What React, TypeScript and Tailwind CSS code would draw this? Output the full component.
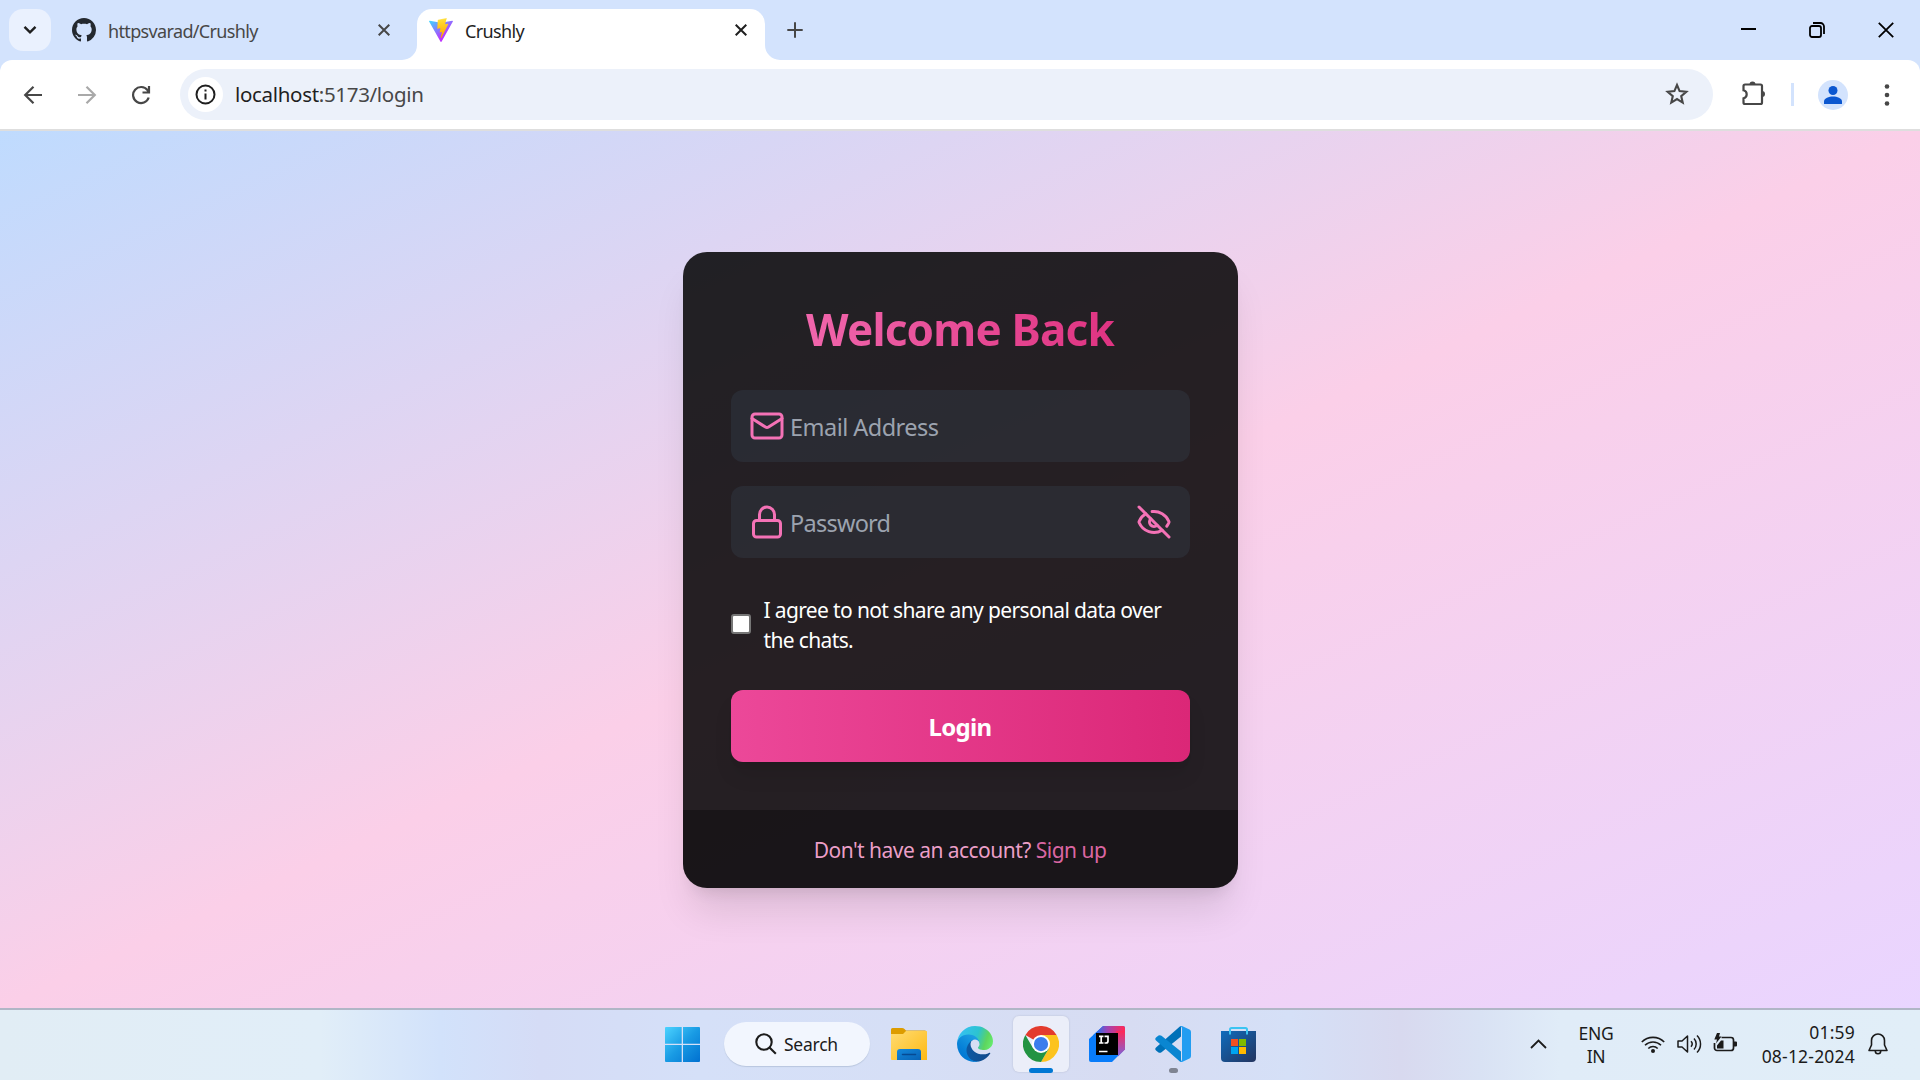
import React from "react";

const UI = "font-['Noto_Sans','Open_Sans',sans-serif]";

function GithubMark() {
  return (
    <svg width="24" height="24" viewBox="0 0 16 16" fill="#24292f" className="shrink-0">
      <path d="M8 0C3.58 0 0 3.58 0 8c0 3.54 2.29 6.53 5.47 7.59.4.07.55-.17.55-.38 0-.19-.01-.82-.01-1.49-2.01.37-2.53-.49-2.69-.94-.09-.23-.48-.94-.82-1.13-.28-.15-.68-.52-.01-.53.63-.01 1.08.58 1.23.82.72 1.21 1.87.87 2.33.66.07-.52.28-.87.51-1.07-1.78-.2-3.64-.89-3.64-3.95 0-.87.31-1.59.82-2.15-.08-.2-.36-1.02.08-2.12 0 0 .67-.21 2.2.82.64-.18 1.32-.27 2-.27s1.36.09 2 .27c1.53-1.04 2.2-.82 2.2-.82.44 1.1.16 1.92.08 2.12.51.56.82 1.27.82 2.15 0 3.07-1.87 3.75-3.65 3.95.29.25.54.73.54 1.48 0 1.07-.01 1.93-.01 2.2 0 .21.15.46.55.38A8.01 8.01 0 0 0 16 8c0-4.42-3.58-8-8-8z" />
    </svg>
  );
}

function ViteMark() {
  return (
    <svg width="24" height="24" viewBox="0 0 256 257" className="shrink-0">
      <defs>
        <linearGradient id="va" x1="-.8%" x2="57.6%" y1="7.7%" y2="78.4%">
          <stop offset="0%" stopColor="#41D1FF" />
          <stop offset="100%" stopColor="#BD34FE" />
        </linearGradient>
        <linearGradient id="vb" x1="43.4%" x2="50.3%" y1="2.2%" y2="89%">
          <stop offset="0%" stopColor="#FFEA83" />
          <stop offset="8.3%" stopColor="#FFDD35" />
          <stop offset="100%" stopColor="#FFA800" />
        </linearGradient>
      </defs>
      <path fill="url(#va)" d="M255.153 37.938L134.897 252.976c-2.483 4.44-8.862 4.466-11.382.048L.875 37.958c-2.746-4.814 1.371-10.646 6.827-9.67l120.385 21.517a6.537 6.537 0 0 0 2.322-.004l117.867-21.483c5.438-.991 9.574 4.796 6.877 9.62Z" />
      <path fill="url(#vb)" d="M185.432.063L96.44 17.501a3.268 3.268 0 0 0-2.634 3.014l-5.474 92.456a3.268 3.268 0 0 0 3.997 3.378l24.777-5.718c2.318-.535 4.413 1.507 3.936 3.838l-7.361 36.047c-.495 2.426 1.782 4.5 4.151 3.78l15.304-4.649c2.372-.72 4.652 1.36 4.15 3.788l-11.698 56.621c-.732 3.542 3.979 5.473 5.943 2.437l1.313-2.028l72.516-144.72c1.215-2.423-.88-5.186-3.54-4.672l-25.505 4.922c-2.396.462-4.435-1.77-3.759-4.114l16.646-57.705c.677-2.35-1.37-4.583-3.769-4.113Z" />
    </svg>
  );
}

function TabClose({ color }: { color: string }) {
  return (
    <svg width="12" height="12" viewBox="0 0 12 12" fill="none" stroke={color} strokeWidth="2">
      <path d="M.7.7l10.6 10.6M11.3.7L.7 11.3" />
    </svg>
  );
}

function TabStrip() {
  return (
    <div className="flex h-[60px] bg-[#d3e3fd]">
      <div className="ml-[9px] mt-[9px] flex size-[42px] items-center justify-center rounded-[14px] bg-[#eaf1fe]">
        <svg width="14" height="10" viewBox="0 0 14 10" fill="none" stroke="#1f1f1f" strokeWidth="2.4">
          <path d="M1.5 1.8L7 7.3l5.500-5.500" />
        </svg>
      </div>
      <div className="ml-[21px] flex h-[60px] w-[318px] items-center">
        <GithubMark />
        <span className="ml-3 mt-[3px] whitespace-nowrap text-[18px] tracking-[-0.65px] text-[#474747]">httpsvarad/Crushly</span>
        <span className="ml-auto">
          <TabClose color="#474747" />
        </span>
      </div>
      <div className="relative ml-[27px] mt-[9px] flex h-[51px] w-[348px] items-center rounded-t-[15px] bg-white pl-3 pr-[18px]">
        <svg className="absolute bottom-0 -left-[15px]" width="15" height="15" viewBox="0 0 15 15" fill="#fff">
          <path d="M15 0v15H0A15 15 0 0 0 15 0z" />
        </svg>
        <svg className="absolute bottom-0 -right-[15px]" width="15" height="15" viewBox="0 0 15 15" fill="#fff">
          <path d="M0 0v15h15A15 15 0 0 1 0 0z" />
        </svg>
        <span className="mb-[9px]">
          <ViteMark />
        </span>
        <span className="mb-[6px] ml-3 text-[18px] tracking-[-0.65px] text-[#1f1f1f]">Crushly</span>
        <span className="mb-[9px] ml-auto">
          <TabClose color="#1f1f1f" />
        </span>
      </div>
      <div className="ml-[22px] mt-[22px]">
        <svg width="16" height="16" viewBox="0 0 16 16" stroke="#474747" strokeWidth="2">
          <path d="M8 .3v15.400M.3 8h15.400" />
        </svg>
      </div>
      <div className="ml-auto flex h-[59px] items-center pr-[26px]">
        <svg width="15" height="16" viewBox="0 0 15 16" stroke="#000" strokeWidth="2" className="mr-[53px]">
          <path d="M0 7h15" />
        </svg>
        <svg width="16" height="16" viewBox="0 0 16 16" fill="none" stroke="#000" strokeWidth="1.800" className="mr-[53px]">
          <rect x="1" y="4" width="11" height="11" rx="2" />
          <path d="M4 1h7.500A3.500 3.500 0 0 1 15 4.500V12" />
        </svg>
        <svg width="16" height="16" viewBox="0 0 16 16" stroke="#000" strokeWidth="1.800">
          <path d="M.8.8l14.400 14.400M15.200.8L.8 15.200" />
        </svg>
      </div>
    </div>
  );
}

function Toolbar() {
  return (
    <div className="bg-[#d3e3fd]">
      <div className="flex h-[71px] items-center rounded-t-[12px] border-b-2 border-[#dedede] bg-white">
        <svg width="20" height="20" viewBox="0 0 20 20" fill="none" stroke="#474747" strokeWidth="2.200" className="ml-[23px]">
          <path d="M19 10H2.500M10.500 1.700L2.200 10l8.300 8.300" />
        </svg>
        <svg width="20" height="20" viewBox="0 0 20 20" fill="none" stroke="#a9a9a9" strokeWidth="2.200" className="ml-[34px]">
          <path d="M1 10h16.500M9.500 1.700l8.300 8.300-8.300 8.300" />
        </svg>
        <svg width="20" height="20" viewBox="0 0 20 20" fill="none" stroke="#474747" strokeWidth="2.200" className="ml-[34px]">
          <path d="M17.700 12.500A8 8 0 1 1 16.500 5.200L18 7M18 1v6.500h-6.500" />
        </svg>
        <div className="ml-[29px] flex h-[51px] w-[1533px] items-center rounded-full bg-[#ecf1fa] pl-2 pr-6">
          <div className="flex size-[35px] items-center justify-center rounded-full bg-white">
            <svg width="21" height="21" viewBox="0 0 21 21" fill="none" stroke="#1f1f1f" strokeWidth="2">
              <circle cx="10.500" cy="10.500" r="9" />
              <path d="M10.500 9.500v6M10.500 5.500v2" />
            </svg>
          </div>
          <span className="ml-[12px] text-[20.500px] tracking-[-0.32px] text-[#474747]">
            <span className="text-[#1f1f1f]">localhost</span>:5173/login
          </span>
          <svg width="24" height="24" viewBox="0 0 24 24" fill="none" stroke="#474747" strokeWidth="2.100" className="mb-px ml-auto">
            <path d="M12 3l2.600 6.100 6.700.6-5.100 4.400 1.500 6.500L12 17.100l-5.700 3.500 1.500-6.500-5.100-4.400 6.700-.6z" />
          </svg>
        </div>
        <svg width="26" height="26" viewBox="0 0 26 26" fill="none" className="mb-[3px] ml-[28px]">
          <path d="M4 4.500H19.500a1.500 1.500 0 0 1 1.500 1.500V22.500a1.500 1.500 0 0 1-1.500 1.500H4a1.500 1.500 0 0 1-1.500-1.500V18.300a4.100 4.100 0 0 0 0-8V6A1.500 1.500 0 0 1 4 4.500z" stroke="#474747" strokeWidth="2.200" />
          <path d="M8.500 4.500a3 3 0 0 1 6 0zM21 11a3 3 0 0 1 0 6z" fill="#474747" />
        </svg>
        <div className="ml-[24px] h-[23px] w-[3px] bg-[#d3e3fd]" />
        <div className="ml-6 flex size-[30px] items-end justify-center rounded-full bg-[#d3e3fd]">
          <svg width="18" height="19" viewBox="0 0 18 19" fill="#0b57d0" className="mb-[6px]">
            <circle cx="9" cy="5.500" r="4.500" />
            <path d="M0 19v-2.500C0 13 5 11.500 9 11.500s9 1.500 9 5V19z" />
          </svg>
        </div>
        <svg width="6" height="22" viewBox="0 0 6 22" fill="#474747" className="ml-[36px]">
          <circle cx="3" cy="2.500" r="2.300" />
          <circle cx="3" cy="11" r="2.300" />
          <circle cx="3" cy="19.500" r="2.300" />
        </svg>
      </div>
    </div>
  );
}

const line = {
  width: 36,
  height: 36,
  viewBox: "0 0 24 24",
  fill: "none",
  stroke: "#f472b6",
  strokeWidth: 2,
  strokeLinecap: "round" as const,
  strokeLinejoin: "round" as const,
};

function LoginCard() {
  return (
    <div className="w-[555px] overflow-hidden rounded-[24px] bg-black/85 shadow-[0_30px_37px_-7px_rgba(0,0,0,0.1),0_12px_15px_-9px_rgba(0,0,0,0.1)]">
      <div className="h-[558px] px-12 pt-[49px]">
        <h2 className="mb-[32px] bg-[linear-gradient(to_right,#f472b6,#db2777)] bg-clip-text text-center text-[44px] leading-[57px] font-bold tracking-[-0.8px] text-transparent">
          Welcome Back
        </h2>
        <div className="flex h-[72px] items-center rounded-[12px] bg-[#374151]/35 pl-[18px]">
          <svg {...line}>
            <rect x="2" y="4" width="20" height="16" rx="2" />
            <path d="M22 7l-8.970 5.700a1.940 1.940 0 0 1-2.060 0L2 7" />
          </svg>
          <span className="ml-[5.500px] mt-[5px] text-[23.500px] tracking-[-0.53px] text-[#9ca3af]">Email Address</span>
        </div>
        <div className="mt-6 flex h-[72px] items-center rounded-[12px] bg-[#374151]/35 pl-[18px] pr-[18px]">
          <svg {...line}>
            <rect x="3" y="11" width="18" height="11" rx="2" />
            <path d="M7 11V7a5 5 0 0 1 10 0v4" />
          </svg>
          <span className="ml-[5.500px] mt-[5px] text-[23.500px] tracking-[-0.75px] text-[#9ca3af]">Password</span>
          <svg {...line} className="ml-auto">
            <path d="M10.733 5.076a10.744 10.744 0 0 1 11.205 6.575 1 1 0 0 1 0 .696 10.747 10.747 0 0 1-1.444 2.490" />
            <path d="M14.084 14.158a3 3 0 0 1-4.242-4.242" />
            <path d="M17.479 17.499a10.750 10.750 0 0 1-15.417-5.151 1 1 0 0 1 0-.696 10.750 10.750 0 0 1 4.446-5.143" />
            <path d="M2 2l20 20" />
          </svg>
        </div>
        <div className="mt-[37px] flex items-center">
          <span className="mb-[2px] size-5 shrink-0 rounded-[3px] border-2 border-[#767676] bg-white" />
          <p className="ml-[13px] whitespace-nowrap text-[21px] leading-[30px] tracking-[-0.64px] text-white">
            I agree to not share any personal data over
            <br />
            the chats.
          </p>
        </div>
        <button className="mt-[35px] h-[72px] w-full rounded-[12px] bg-[linear-gradient(to_right,#ec4899,#db2777)] pt-[2px] text-[24px] font-bold tracking-[-0.65px] text-white shadow-[0_15px_22px_-4px_rgba(0,0,0,0.1),0_6px_9px_-6px_rgba(0,0,0,0.1)]">
          Login
        </button>
      </div>
      <div className="flex h-[78px] items-center justify-center gap-[5px] bg-black/30 pt-[5px] text-[21px] tracking-[-0.53px]">
        <span className="text-[#f9a8d4]/95">Don't have an account?</span>
        <span className="text-[#f472b6]/90">Sign up</span>
      </div>
    </div>
  );
}

function WindowsLogo() {
  return (
    <svg width="35" height="35" viewBox="0 0 35 35">
      <defs>
        <linearGradient id="wl" x1="0" y1="0" x2="35" y2="35" gradientUnits="userSpaceOnUse">
          <stop stopColor="#4cd3ff" />
          <stop offset=".5" stopColor="#199be4" />
          <stop offset="1" stopColor="#0070d0" />
        </linearGradient>
      </defs>
      <path fill="url(#wl)" d="M1 0h15.700v16.700H0V1a1 1 0 0 1 1-1zM18 0h16a1 1 0 0 1 1 1v15.700H18zM0 18h16.700v17H1a1 1 0 0 1-1-1zM18 18h17v16a1 1 0 0 1-1 1H18z" />
    </svg>
  );
}

function FolderIcon() {
  return (
    <svg width="36" height="34" viewBox="0 0 36 34">
      <defs>
        <linearGradient id="fa" x1="0" y1="0" x2="1" y2="1">
          <stop stopColor="#ffdc73" />
          <stop offset="1" stopColor="#fdb913" />
        </linearGradient>
        <linearGradient id="fb" x1="0" y1="0" x2="1" y2="1">
          <stop stopColor="#1389dc" />
          <stop offset="1" stopColor="#0862b5" />
        </linearGradient>
      </defs>
      <path fill="#dd9c00" d="M1.500 1H11q1.500 0 2.500 1l1.500 1.500H34q1.500 0 1.500 1.500V16H0V2.500Q0 1 1.500 1z" />
      <path fill="url(#fa)" d="M0 7h12l3-3H35q1 0 1 1V33H1q-1 0-1-1z" />
      <path fill="url(#fb)" d="M9 22h18q3 0 3 3v8H6v-8q0-3 3-3z" />
      <path stroke="#064a92" strokeWidth="1.500" strokeLinecap="round" d="M11.500 27.500h13" />
    </svg>
  );
}

function EdgeIcon() {
  return (
    <svg width="36" height="36" viewBox="0 0 256 256">
      <defs>
        <linearGradient id="ea" x1="58" x2="231" y1="177" y2="177" gradientUnits="userSpaceOnUse">
          <stop stopColor="#0c59a4" />
          <stop offset="1" stopColor="#114a8b" />
        </linearGradient>
        <linearGradient id="eb" x1="150" x2="50" y1="100" y2="230" gradientUnits="userSpaceOnUse">
          <stop stopColor="#1b9de2" />
          <stop offset=".2" stopColor="#1595df" />
          <stop offset=".7" stopColor="#0680d7" />
          <stop offset="1" stopColor="#0078d4" />
        </linearGradient>
        <linearGradient id="ec" x1="20" x2="250" y1="50" y2="130" gradientUnits="userSpaceOnUse">
          <stop stopColor="#35c1f1" />
          <stop offset=".5" stopColor="#2cc3d0" />
          <stop offset=".8" stopColor="#5ed55e" />
          <stop offset="1" stopColor="#66eb6e" />
        </linearGradient>
      </defs>
      <path fill="url(#ea)" d="M231 190.500c-3.400 1.800-6.900 3.400-10.500 4.700a101.900 101.900 0 0 1-35.900 6.500c-47.300 0-88.500-32.500-88.500-74.300a31.500 31.500 0 0 1 16.400-27.300c-42.800 1.800-53.800 46.400-53.800 72.500 0 73.900 68.100 81.400 82.800 81.400 7.900 0 19.800-2.300 27-4.600l1.300-.4a128.300 128.300 0 0 0 66.600-52.800 4 4 0 0 0-5.400-5.700z" />
      <path fill="url(#eb)" d="M105.700 241.400a79.200 79.200 0 0 1-22.700-21.300 80.700 80.700 0 0 1 29.500-120c3.200-1.500 8.500-4.200 15.600-4.100a32.400 32.400 0 0 1 25.700 13 31.900 31.900 0 0 1 6.300 18.700c0-.2 24.500-79.600-80-79.600-43.900 0-80 41.700-80 78.200a130.200 130.200 0 0 0 12.100 56 128 128 0 0 0 156.400 67 75.500 75.500 0 0 1-62.800-7.800z" />
      <path fill="url(#ec)" d="M152.300 148.900c-.9 1-3.400 2.500-3.400 5.600 0 2.600 1.700 5.200 4.800 7.300 14.300 10 41.400 8.600 41.500 8.600a59.600 59.600 0 0 0 30.300-8.300 61.400 61.400 0 0 0 30.400-52.900c.3-22.400-8-37.300-11.300-43.900C223.500 23.900 177.700 0 128 0A128 128 0 0 0 0 126.200c.5-36.500 36.800-66 80-66 3.500 0 23.500.3 42 10 16.300 8.600 24.900 19 30.800 29.200 6.200 10.700 7.300 24.100 7.300 29.500s-2.700 13.300-7.800 20z" />
    </svg>
  );
}

function ChromeIcon() {
  return (
    <svg width="36" height="36" viewBox="0 0 48 48">
      <path fill="#e33b2e" d="M24 24L3.200 12A24 24 0 0 1 44.800 12z" />
      <path fill="#fcc31e" d="M24 12h20.800A24 24 0 0 1 24 48l10.400-18z" />
      <path fill="#229342" d="M13.600 30L3.200 12A24 24 0 0 0 24 48l10.400-18z" />
      <circle cx="24" cy="24" r="12" fill="#fff" />
      <circle cx="24" cy="24" r="9.500" fill="#3b7ded" />
    </svg>
  );
}

function IntellijIcon() {
  return (
    <svg width="36" height="36" viewBox="0 0 36 36">
      <defs>
        <linearGradient id="ij" x1="5" y1="5" x2="35" y2="4" gradientUnits="userSpaceOnUse">
          <stop stopColor="#087cfa" />
          <stop offset=".45" stopColor="#a044b4" />
          <stop offset="1" stopColor="#ff2857" />
        </linearGradient>
        <linearGradient id="ik" x1="32" y1="5" x2="31" y2="30" gradientUnits="userSpaceOnUse">
          <stop stopColor="#fe2857" />
          <stop offset="1" stopColor="#7f62d8" />
        </linearGradient>
      </defs>
      <path fill="#087cfa" d="M0 13L14 0h20q2 0 2 2v21L23 36H2q-2 0-2-2z" />
      <path fill="url(#ij)" d="M4 9.300L13 1q1-1 2.500-1H34q2 0 2 2v10H4z" />
      <path fill="url(#ik)" d="M27 5h9v18.500l-7 7z" />
      <path d="M7 7h22v22H7z" />
      <path d="M10 10.300h4.500M12.200 10.300v6.700M10 17h4.500M15.500 10.300H19V15q0 2-2 2h-1.500M10 25.500h8.500" fill="none" stroke="#fff" strokeWidth="1.700" />
    </svg>
  );
}

function CodeIcon() {
  return (
    <svg width="36" height="36" viewBox="0 0 36 36">
      <path fill="#0071b8" d="M26 0v10.500L6.500 26.200q-1.500 1.200-3 .2l-2.500-2q-1.500-1.500 0-3L24 1.200Q25 .2 26 0z" />
      <path fill="#0a86d1" d="M26 36V25.500L6.500 9.800q-1.500-1.200-3-.2l-2.500 2q-1.500 1.500 0 3L24 34.800q1 1 2 1.200z" />
      <path fill="#229df1" d="M27 0l7.500 3.500Q36 4.200 36 6v24q0 1.800-1.500 2.500L27 36q-1.500.3-2.500-.7 2.500.7 2.500-2V2.700q0-2.700-2.500-2Q25.500-.3 27 0z" />
    </svg>
  );
}

function StoreIcon() {
  return (
    <svg width="35" height="36" viewBox="0 0 35 36">
      <defs>
        <linearGradient id="st" x1="0" y1="0" x2="1" y2="1">
          <stop stopColor="#0f6cbd" />
          <stop offset="1" stopColor="#23345f" />
        </linearGradient>
      </defs>
      <path fill="url(#st)" d="M0 5h35v27q0 4-4 4H4q-4 0-4-4z" />
      <path d="M9 8.500V3.500Q9 2 10.500 2h14Q26 2 26 3.500v5" fill="none" stroke="#3bc4f2" strokeWidth="2" />
      <path fill="#f25022" d="M10 13h7v7h-7z" />
      <path fill="#7fba00" d="M18 13h7v7h-7z" />
      <path fill="#00a4ef" d="M10 21h7v7h-7z" />
      <path fill="#ffb900" d="M18 21h7v7h-7z" />
    </svg>
  );
}

function Taskbar() {
  return (
    <div className="grid h-[72px] grid-cols-[664px_1fr_402px] border-t-2 border-[#b0b6c6] bg-[linear-gradient(90deg,#e1edf5_0px,#e1eef8_320px,#d2e2fb_440px,#d5dcf6_540px,#d5e0f8_700px,#d6dff6_900px,#d7dcf2_1130px,#d5e0f7_1290px,#d8d9ef_1400px,#d9e2f4_1480px,#e0ecf8_1560px,#e1eef8_1920px)]">
      <div />
      <div className="flex h-[68px] items-center">
        <span className="ml-px">
          <WindowsLogo />
        </span>
        <div className="ml-[24px] flex h-[44px] w-[146px] items-center rounded-full bg-[#f2f6fe] pl-[31px] shadow-[0_1px_1px_#b9c6de]">
          <svg width="22" height="22" viewBox="0 0 22 22" fill="none" stroke="#1b1b1b" strokeWidth="2.100">
            <circle cx="9" cy="9" r="7.700" />
            <path d="M14.500 14.500l6.300 6.300" />
          </svg>
          <span className="ml-[7px] mt-px text-[17.500px] tracking-[-0.25px] text-[#1b1b1b]">Search</span>
        </div>
        <span className="ml-[21px]">
          <FolderIcon />
        </span>
        <span className="ml-[30px]">
          <EdgeIcon />
        </span>
        <div className="relative ml-[20px] flex h-[56px] w-[56px] items-center justify-center rounded-[6px] bg-[#ebeef9] shadow-[0_0_2px_#b4bace]">
          <ChromeIcon />
          <i className="absolute -bottom-px h-[5px] w-6 rounded-full bg-[#0078d4]" />
        </div>
        <span className="ml-[20px]">
          <IntellijIcon />
        </span>
        <span className="relative ml-[30px]">
          <CodeIcon />
          <i className="absolute left-[14px] top-[42px] h-[5px] w-[9px] rounded-full bg-[#7f8492]" />
        </span>
        <span className="ml-[30px]">
          <StoreIcon />
        </span>
      </div>
      <div className="flex h-[68px] items-center text-[17.500px] leading-6 tracking-[-0.3px] text-[#1b1b1b]">
        <svg width="17" height="10" viewBox="0 0 17 10" fill="none" stroke="#1b1b1b" strokeWidth="1.800" className="ml-[12px]">
          <path d="M1 9l7.500-7.500L16 9" />
        </svg>
        <div className="ml-[30px] mt-px w-[38px] text-center leading-[23px]">
          ENG
          <br />
          IN
        </div>
        <svg width="24" height="18" viewBox="0 0 24 18" fill="none" stroke="#1b1b1b" strokeWidth="1.600" className="mb-px ml-[26px]">
          <path d="M.8 7a15.800 15.800 0 0 1 22.400 0M4 10.300a11.300 11.300 0 0 1 16 0M7.300 13.500a6.700 6.700 0 0 1 9.400 0" />
          <circle cx="12" cy="16" r="2" fill="#1b1b1b" stroke="none" />
        </svg>
        <svg width="25" height="20" viewBox="0 0 25 20" fill="none" stroke="#1b1b1b" strokeWidth="1.500" className="ml-[12px]">
          <path d="M1 7v6h4l5.500 5V2L5 7z" strokeLinejoin="round" />
          <path d="M14 7.300a4 4 0 0 1 0 5.400M17 4.500a8 8 0 0 1 0 11M20 1.500a12 12 0 0 1 0 17" />
        </svg>
        <svg width="25" height="20" viewBox="0 0 25 20" fill="none" className="mb-[3px] ml-[11px]">
          <path d="M8.500 4.500h9.500a2.500 2.500 0 0 1 2.500 2.500v8a2.500 2.500 0 0 1-2.500 2.500H4a2.500 2.500 0 0 1-2.500-2.500v-5" stroke="#1b1b1b" strokeWidth="1.700" />
          <path d="M21 8.500h2a1 1 0 0 1 1 1v3a1 1 0 0 1-1 1h-2zM4 0h3L6 3.500h2.500L3 10.500 4 6.500H1.300zM4 12.500L8 7.500h2.500V15.500H4z" fill="#1b1b1b" />
        </svg>
        <div className="ml-auto whitespace-nowrap text-right tracking-[0.2px]">
          01:59
          <br />
          08-12-2024
        </div>
        <svg width="20" height="22" viewBox="0 0 20 22" fill="none" stroke="#1b1b1b" strokeWidth="1.600" className="ml-[13px] mr-[32px]">
          <path d="M10 1a6.500 6.500 0 0 0-6.500 6.500V12L1 17.500h18L16.500 12V7.500A6.500 6.500 0 0 0 10 1z" strokeLinejoin="round" />
          <path d="M7.300 18a2.700 2.700 0 0 0 5.400 0" />
        </svg>
      </div>
    </div>
  );
}

export default function App() {
  return (
    <div className={`flex h-[1080px] w-[1920px] flex-col overflow-hidden ${UI}`}>
      <TabStrip />
      <Toolbar />
      <main className="flex h-[877px] items-center justify-center bg-[linear-gradient(to_bottom_right,#bfdbfe,#fbcfe8,#e9d5ff)]">
        <LoginCard />
      </main>
      <Taskbar />
    </div>
  );
}
